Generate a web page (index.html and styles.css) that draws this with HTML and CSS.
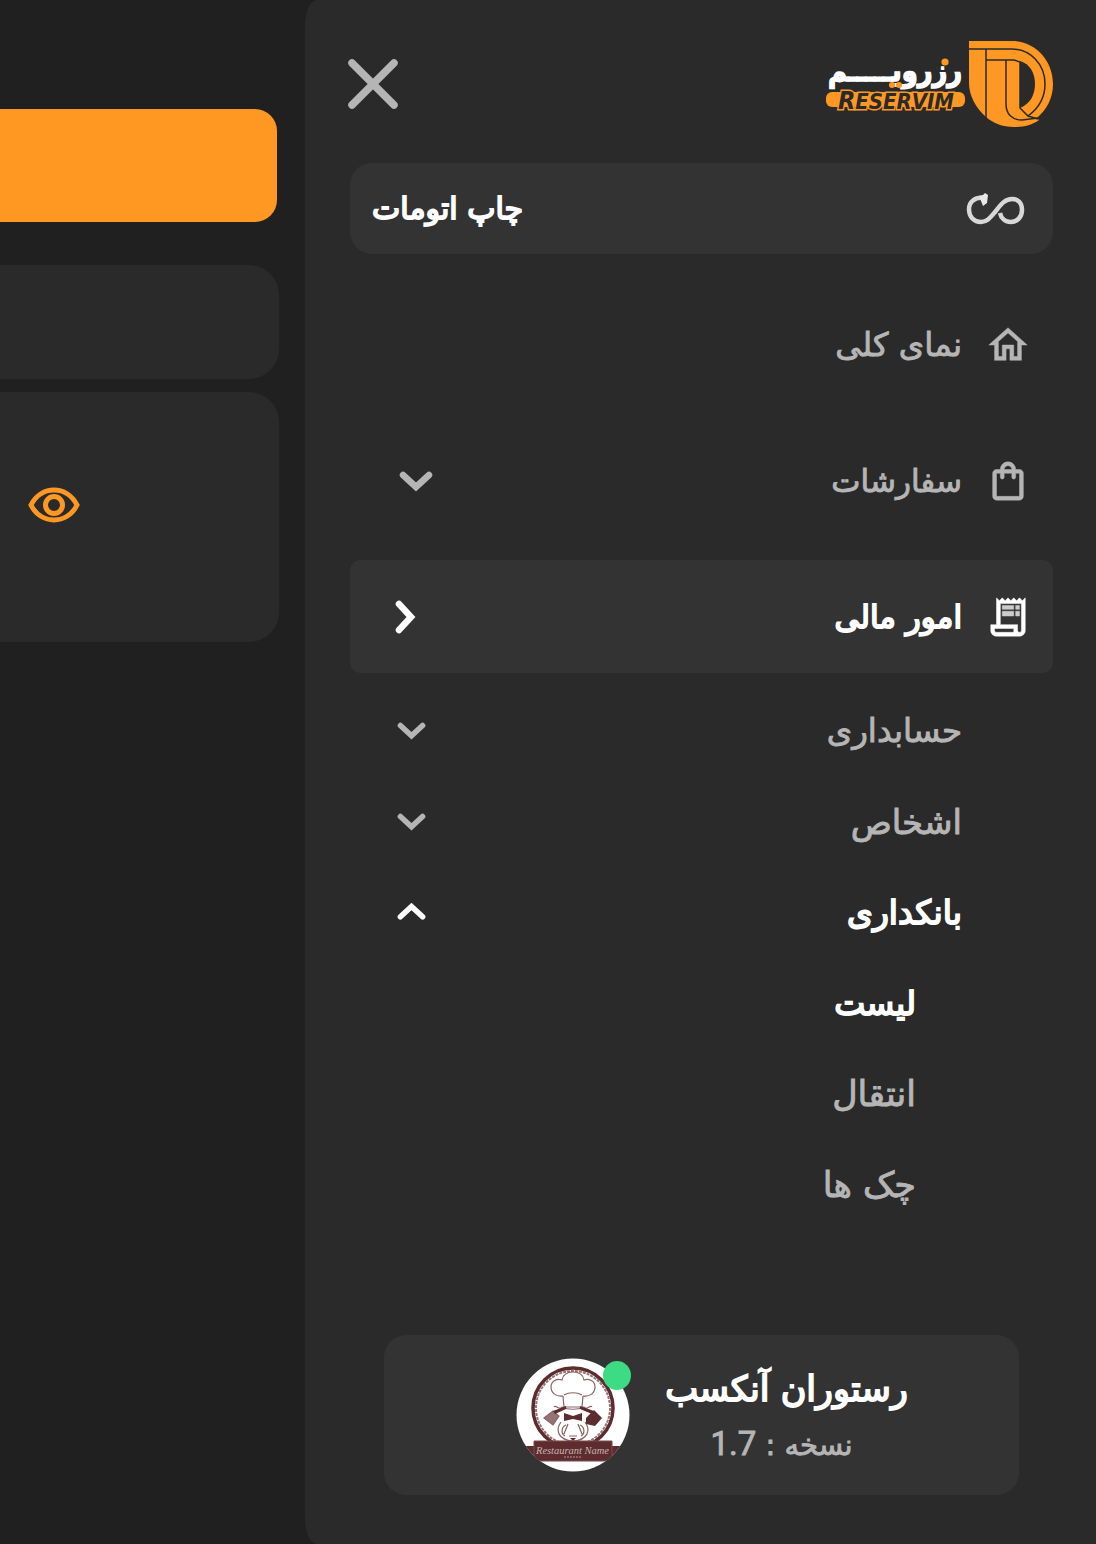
FILE: index.html
```
<!DOCTYPE html>
<html lang="fa" dir="rtl">
<head>
  <meta charset="UTF-8" />
  <meta name="viewport" content="width=device-width, initial-scale=1.0"/>
  <title>رزرویم</title>
  <link rel="stylesheet" href="styles.css">
</head>
<body>

  <aside class="sidebar">
    <header class="sidebar-header">
      <svg class="logo" viewBox="0 0 228 88" direction="ltr">
        <path fill="#ff9823" d="M144 1h43c23 0 41 19 41 43 0 15-7 26-16 34l2 2c-7 5-15 7-25 7-12 0-21-4-28-10-10-9-17-21-17-34z"/>
        <path fill="#2a2a2a" d="M195 21c10 3 15 12 15 23s-5 20-15 24z"/>
        <g fill="none" stroke="#2a2a2a" stroke-width="1.5">
          <path d="M144 9h43c18 0 33 15 33 35 0 14-6 24-17 32"/>
          <path d="M161 9v70"/>
          <path d="M161 20h28l6 2v46l8 8 10 3"/>
          <path d="M181 20v44c0 10 6 16 16 16l16-2"/>
        </g>
        <text class="logo-fa" x="137" y="41" textLength="134" lengthAdjust="spacingAndGlyphs">رزرویـــــم</text>
        <circle cx="120" cy="22" r="3.600" fill="#ff9823"/>
        <g fill="#ff9823">
          <circle cx="67" cy="45" r="3"/>
          <circle cx="74" cy="45" r="3"/>
        </g>
        <rect x="1" y="52" width="139" height="15" rx="6" fill="#ff9823"/>
        <text class="logo-en" x="13" y="69" textLength="116" lengthAdjust="spacingAndGlyphs">R<tspan class="logo-caps">ESERVIM</tspan></text>
      </svg>
      <button class="close-btn" aria-label="بستن">
        <svg viewBox="0 0 52 52"><path d="M5 5l42 42M47 5L5 47"/></svg>
      </button>
    </header>

    <div class="auto-print">
      <svg class="infinity" viewBox="0 0 58 34">
        <path d="M16 6C8 5 2 10 2 17c0 8 5 13 12 13 6 0 9-4 14-10s9-13 17-13c6 0 10 4 10 11 0 7-5 12-11 12-6 0-10-4-11-9"/>
        <path class="tip" d="M12 4l4-1 2-2 3 2-1 8-4 3-2-5z"/>
      </svg>
      <span class="auto-print-label">چاپ اتومات</span>
    </div>

    <nav class="menu">
      <a class="menu-item">
        <svg class="icon" viewBox="0 0 24 24"><path d="M12 5.69l5 4.5V18h-2v-6H9v6H7v-7.81l5-4.5M12 3 2 12h3v8h6v-6h2v6h6v-8h3L12 3z"/></svg>
        <span>نمای کلی</span>
      </a>
      <a class="menu-item orders">
        <svg class="icon" viewBox="0 0 24 24"><path d="M18 6h-2c0-2.21-1.79-4-4-4S8 3.79 8 6H6c-1.1 0-2 .9-2 2v12c0 1.1.9 2 2 2h12c1.1 0 2-.9 2-2V8c0-1.1-.9-2-2-2zm-6-2c1.1 0 2 .9 2 2h-4c0-1.1.9-2 2-2zm6 16H6V8h2v2c0 .55.45 1 1 1s1-.45 1-1V8h4v2c0 .55.45 1 1 1s1-.45 1-1V8h2v12z"/></svg>
        <span>سفارشات</span>
        <svg class="chevron" viewBox="0 0 34 22"><path d="M4 5l13 12L30 5"/></svg>
      </a>
      <a class="menu-item active">
        <svg class="icon" viewBox="0 0 24 24"><path d="M19.5 3.5 18 2l-1.5 1.5L15 2l-1.5 1.5L12 2l-1.5 1.5L9 2 7.5 3.5 6 2v14H3v3c0 1.66 1.34 3 3 3h12c1.66 0 3-1.34 3-3V2l-1.5 1.5zM15 20H6c-.55 0-1-.45-1-1v-1h10v2zm4-1c0 .55-.45 1-1 1s-1-.45-1-1v-3H8V5h11v14z"/><path opacity=".75" d="M9 6h6v2H9zM16 6h2v2h-2zM9 9h6v2.500H9zM16 9h2v2.500h-2z"/></svg>
        <span>امور مالی</span>
        <svg class="chevron side" viewBox="0 0 22 34"><path d="M4 4l12 13L4 30"/></svg>
      </a>
    </nav>

    <nav class="submenu">
      <a class="sub-item"><span>حسابداری</span><svg class="chevron" viewBox="0 0 34 22"><path d="M4 4l13 12L30 4"/></svg></a>
      <a class="sub-item people"><span>اشخاص</span><svg class="chevron" viewBox="0 0 34 22"><path d="M4 4l13 12L30 4"/></svg></a>
      <a class="sub-item open"><span>بانکداری</span><svg class="chevron" viewBox="0 0 34 22"><path d="M4 16L17 4l13 12"/></svg></a>
      <a class="sub-item nested open"><span>لیست</span></a>
      <a class="sub-item nested"><span>انتقال</span></a>
      <a class="sub-item nested"><span>چک ها</span></a>
    </nav>

    <footer class="account">
      <div class="account-text">
        <div class="account-name">رستوران آنکسب</div>
        <div class="account-version">نسخه : <bdi>1.7</bdi></div>
      </div>
      <div class="avatar">
        <svg viewBox="0 0 114 114" direction="ltr">
          <clipPath id="round"><circle cx="57" cy="57" r="56.500"/></clipPath>
          <g clip-path="url(#round)">
            <rect width="114" height="114" fill="#fff"/>
            <circle cx="57" cy="50" r="40" fill="none" stroke="#5c2c2e" stroke-width="3.500"/>
            <circle cx="57" cy="50" r="37" fill="none" stroke="#967375" stroke-width="2" stroke-dasharray="3 1"/>
            <g fill="none" stroke="#8b6264" stroke-width="1.200">
              <path d="M47 38c-7 1-12-3-12-9s6-9 11-7c1-6 6-8 11-8s10 2 11 8c5-2 11 1 11 7s-5 10-12 9M47 38l1 11h18l1-11M48 37c5-3 13-3 18 0"/>
              <path d="M38 49c2-3 5 4 8 0 6 3 16 3 22 0 3 4 6-3 8 0M45 64c-6 8-3 18 12 19 15-1 18-11 12-19M52 66l-4 10M62 66l4 10M50 67c-5 2-5 9-1 11M64 67c5 2 5 9 1 11M53 78h8"/>
              <path d="M28 60l9-7 6 5-6 9z" fill="#967375"/>
            </g>
            <path fill="#5c2c2e" d="M48 55l9 3 9-3v8l-9-2-9 2zM70 60l8-8 8 8-7 8-9-2zM37 53l13-5v3l-11 5zM64 48l14 5-2 3-12-5zM54 80h6l-3 3z"/>
            <path fill="#5c2c2e" d="M8 88h98v14H8z"/>
            <path fill="#5c2c2e" stroke="#7b4b4d" d="M18 83h78v20H18z"/>
            <text class="badge-name" x="20" y="96" textLength="73" lengthAdjust="spacingAndGlyphs">Restaurant Name</text>
            <path stroke="#967375" stroke-width="1.500" stroke-dasharray="2 1" d="M48 99h17"/>
          </g>
        </svg>
        <span class="status-dot"></span>
      </div>
    </footer>
  </aside>

  <main class="content">
    <div class="panel banner"></div>
    <div class="panel filter"></div>
    <div class="panel card">
      <svg class="eye" viewBox="0 0 52 36">
        <path d="M3 18C8 8 17 3 26 3s18 5 23 15c-5 10-14 15-23 15S8 28 3 18z"/>
        <circle cx="26" cy="18" r="8.500"/>
      </svg>
    </div>
  </main>

</body>
</html>
```
FILE: styles.css
```
:root {
  --bg-color: #202020;
  --panel-bg: #2a2a2a;
  --raised-bg: #333333;
  --accent: #ff9823;
  --muted: #b5b5b5;
}

* { box-sizing: border-box; }

body {
  margin: 0;
  height: 1544px;
  display: flex;
  overflow: hidden;
  font-family: "DejaVu Sans", sans-serif;
  font-size: 32.5px;
  -webkit-text-stroke: 0.9px currentColor;
  background: var(--bg-color);
  color: var(--muted);
}

.sidebar {
  width: 791px;
  flex: none;
  height: 1544px;
  display: flex;
  flex-direction: column;
  padding: 40px 43px 49px 45px;
  background: var(--panel-bg);
  border-radius: 0 0 0 12px / 0 0 0 26px;
  border-top-left-radius: 12px 26px;
}

.sidebar-header {
  height: 88px;
  display: flex;
  justify-content: space-between;
  align-items: center;
}

.logo {
  width: 228px;
  height: 88px;
}

.logo-fa {
  direction: rtl;
  font: bold 30px "DejaVu Sans", sans-serif;
  fill: #fff;
  -webkit-text-stroke: 0;
  stroke: #fff;
  stroke-width: 1.5px;
}

.logo-en {
  font: italic bold 24px "DejaVu Sans", sans-serif;
  fill: #2a2a2a;
  -webkit-text-stroke: 0;
  stroke: var(--accent);
  stroke-width: 3px;
  paint-order: stroke;
}

.logo-caps { font-size: 21px; }

.close-btn {
  margin-left: -3px;
  padding: 0;
  border: none;
  background: none;
  cursor: pointer;
}

.close-btn svg {
  display: block;
  width: 52px;
  height: 52px;
  stroke: var(--muted);
  stroke-width: 7.5;
  stroke-linecap: round;
}

.auto-print {
  height: 91px;
  margin-top: 35px;
  padding: 0 28px 0 22px;
  display: flex;
  justify-content: space-between;
  align-items: center;
  background: var(--raised-bg);
  border-radius: 22px;
  color: #fff;
  font-size: 30px;
  -webkit-text-stroke-width: 1.8px;
}

.infinity {
  width: 58px;
  height: 34px;
  overflow: visible;
  fill: none;
  stroke: #d8d8d8;
  stroke-width: 4.5;
}

.infinity .tip {
  fill: #e8e8e8;
  stroke: none;
}

.menu {
  margin-top: 34px;
  display: flex;
  flex-direction: column;
  gap: 23px;
}

.menu-item {
  height: 113px;
  padding: 0 22px;
  display: flex;
  align-items: center;
  border-radius: 10px;
}

.menu-item.orders { font-size: 31px; }

.menu-item.active {
  background: var(--raised-bg);
  color: #fff;
  font-size: 31px;
  -webkit-text-stroke-width: 1.8px;
}

.icon {
  width: 46px;
  height: 46px;
  margin-left: 23px;
  fill: currentColor;
  stroke: currentColor;
  stroke-width: 0.25;
}

.chevron {
  width: 34px;
  height: 22px;
  margin: 0 auto 0 27px;
  fill: none;
  stroke: currentColor;
  stroke-width: 6.5;
  stroke-linecap: round;
}

.chevron.side {
  width: 22px;
  height: 34px;
  margin-left: 23px;
}

.submenu {
  margin-top: 13px;
}

.sub-item {
  height: 90.7px;
  padding: 0 91px 0 47px;
  display: flex;
  align-items: center;
}

.sub-item .chevron {
  width: 29px;
  height: 19px;
  margin-left: 0;
}

.sub-item.people { font-size: 34px; }

.sub-item.nested {
  padding-right: 137px;
  font-size: 35px;
}

.sub-item.open {
  color: #fff;
  font-size: 33px;
  -webkit-text-stroke-width: 1.8px;
}

.account {
  width: 635px;
  height: 160px;
  margin: auto auto 0;
  padding-right: 110px;
  display: flex;
  align-items: center;
  gap: 34px;
  background: var(--raised-bg);
  border-radius: 22px;
}

.account-text {
  width: 245px;
  text-align: center;
  white-space: nowrap;
}

.account-name {
  color: #fff;
  font-size: 35px;
  line-height: 40px;
  -webkit-text-stroke-width: 1.8px;
}

.account-version {
  margin-top: 18px;
  padding-left: 0;
  padding-right: 10px;
  font-size: 29px;
  line-height: 34px;
}

.account-version bdi {
  font-family: Roboto, sans-serif;
  font-size: 33px;
}

.avatar {
  position: relative;
  width: 114px;
  height: 114px;
}

.avatar svg { display: block; }

.badge-name {
  font: italic 10px "Liberation Serif", serif;
  fill: #c9b3b4;
  -webkit-text-stroke: 0;
}

.status-dot {
  position: absolute;
  top: 3px;
  right: -1px;
  width: 28px;
  height: 29px;
  border-radius: 50%;
  background: #3ddc84;
}

.content {
  flex: 1;
  padding: 109px 26px 0 0;
}

.panel {
  background: var(--panel-bg);
  border-radius: 0 30px 30px 0;
}

.banner {
  height: 113px;
  margin-right: 2px;
  background: var(--accent);
  border-radius: 0 22px 22px 0;
}

.filter {
  height: 114px;
  margin-top: 43px;
}

.card {
  height: 250px;
  margin-top: 13px;
  padding: 95px 199px 0 0;
}

.eye {
  display: block;
  width: 52px;
  height: 36px;
  fill: none;
  stroke: var(--accent);
  stroke-width: 5;
}
```
